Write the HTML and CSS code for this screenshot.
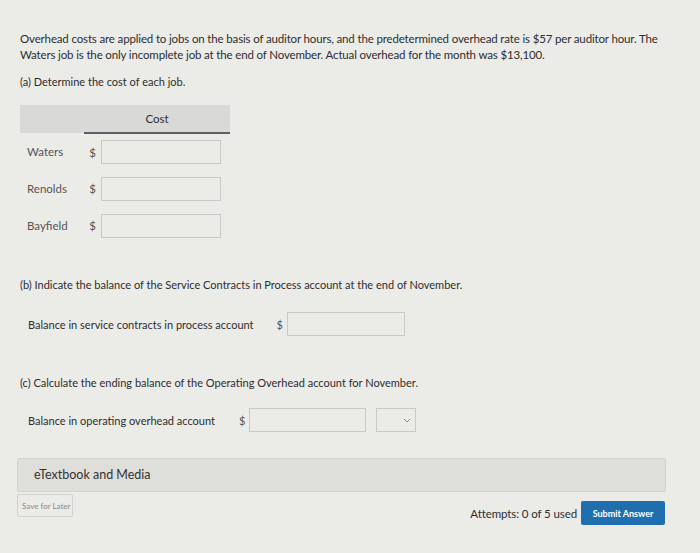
FILE: index.html
```html
<!DOCTYPE html>
<html lang="en">
<head>
  <meta charset="UTF-8" />
  <title>Question</title>
  <link rel="stylesheet" href="styles.css">
</head>
<body>
  <div class="page">
    <p class="intro">Overhead costs are applied to jobs on the basis of auditor hours, and the predetermined overhead rate is $57 per auditor hour. The Waters job is the only incomplete job at the end of November. Actual overhead for the month was $13,100.</p>

    <p class="part">(a) Determine the cost of each job.</p>

    <table class="cost-table">
      <thead>
        <tr>
          <th class="blank"></th>
          <th class="cost-head" colspan="2">Cost</th>
        </tr>
      </thead>
      <tbody>
        <tr>
          <td class="job">Waters</td>
          <td class="dollar">$</td>
          <td><input type="text" class="num"></td>
        </tr>
        <tr>
          <td class="job">Renolds</td>
          <td class="dollar">$</td>
          <td><input type="text" class="num"></td>
        </tr>
        <tr>
          <td class="job">Bayfield</td>
          <td class="dollar">$</td>
          <td><input type="text" class="num"></td>
        </tr>
      </tbody>
    </table>

    <p class="part part-b">(b) Indicate the balance of the Service Contracts in Process account at the end of November.</p>

    <div class="answer-row row-b">
      <span class="answer-label">Balance in service contracts in process account</span>
      <span class="dollar">$</span>
      <input type="text" class="num">
    </div>

    <p class="part part-c">(c) Calculate the ending balance of the Operating Overhead account for November.</p>

    <div class="answer-row row-c">
      <span class="answer-label">Balance in operating overhead account</span>
      <span class="dollar">$</span>
      <input type="text" class="num">
      <div class="select-box">
        <svg width="8" height="5" viewBox="0 0 8 5"><path d="M1 1 L4 4 L7 1" fill="none" stroke="#888" stroke-width="1"/></svg>
      </div>
    </div>

    <div class="etext">eTextbook and Media</div>

    <div class="footer">
      <button class="save">Save for Later</button>
      <div class="submit-group">
        <span class="attempts">Attempts: 0 of 5 used</span>
        <button class="submit">Submit Answer</button>
      </div>
    </div>
  </div>
</body>
</html>
```

FILE: styles.css
```css
* {
  box-sizing: border-box;
}

body {
  margin: 0;
  background: #ebebe8;
  font-family: Lato, "Liberation Sans", sans-serif;
  color: #2e2e2e;
}

.page {
  width: 700px;
  height: 553px;
  padding: 31px 30px 0 20px;
}

p {
  margin: 0;
}

.intro {
  font-size: 11.5px;
  line-height: 16px;
  letter-spacing: -0.15px;
}

.part {
  font-size: 11px;
  line-height: 16px;
  margin-top: 11px;
}

.cost-table {
  border-collapse: collapse;
  margin-top: 15px;
  width: 210px;
  font-size: 11.5px;
}

.cost-table th {
  background: #d9d9d7;
  height: 28px;
  padding: 0;
  font-weight: normal;
}

.cost-table .blank {
  width: 64px;
}

.cost-table .cost-head {
  border-bottom: 2px solid #5f6063;
  text-align: center;
}

.cost-table td {
  padding: 0;
  height: 37px;
  vertical-align: middle;
}

.cost-table .job {
  padding-left: 7px;
  color: #555;
}

.cost-table .dollar {
  width: 17px;
  text-align: center;
  color: #555;
}

input.num {
  display: block;
  width: 120px;
  height: 24px;
  border: 1px solid #c9c9c7;
  background: #ebebe8;
  margin: 0;
}

.part-b {
  margin-top: 33px;
}

.part-c {
  margin-top: 39px;
}

.answer-row {
  display: flex;
  align-items: center;
  font-size: 11px;
  padding-left: 8px;
}

.row-b {
  margin-top: 19px;
}

.row-c {
  margin-top: 17px;
}

.answer-label {
  margin-right: 23px;
}

.row-c .answer-label {
  margin-right: 24px;
}

.answer-row .dollar {
  width: 10px;
  color: #555;
}

.row-b input.num {
  width: 118px;
}

.row-c input.num {
  width: 117px;
}

.select-box {
  width: 40px;
  height: 24px;
  border: 1px solid #c9c9c7;
  margin-left: 10px;
  display: flex;
  align-items: center;
  justify-content: flex-end;
  padding-right: 4px;
}

.etext {
  margin-top: 26px;
  margin-left: -3px;
  width: 649px;
  height: 34px;
  background: #dededb;
  border: 1px solid #d2d2cf;
  border-radius: 2px;
  font-size: 12.5px;
  line-height: 32px;
  padding-left: 16px;
  color: #333;
}

.footer {
  display: flex;
  justify-content: space-between;
  margin-left: -3px;
  width: 648px;
  margin-top: 2px;
}

.save {
  width: 56px;
  height: 23px;
  background: #ebebe8;
  border: 1px solid #d2d2cf;
  border-radius: 2px;
  font-family: Lato, "Liberation Sans", sans-serif;
  font-size: 8px;
  color: #8a8a8a;
  padding: 0 4px;
  text-align: left;
  white-space: nowrap;
  align-self: flex-start;
}

.submit-group {
  display: flex;
  align-items: center;
  margin-top: 7px;
}

.attempts {
  font-size: 11.5px;
  letter-spacing: -0.1px;
  margin-right: 4px;
  padding-top: 1px;
}

.submit {
  width: 84px;
  height: 24px;
  background: #1f6fae;
  color: #fff;
  border: none;
  border-radius: 2px;
  font-family: Lato, "Liberation Sans", sans-serif;
  font-size: 9px;
  font-weight: bold;
  padding: 0;
}
```
